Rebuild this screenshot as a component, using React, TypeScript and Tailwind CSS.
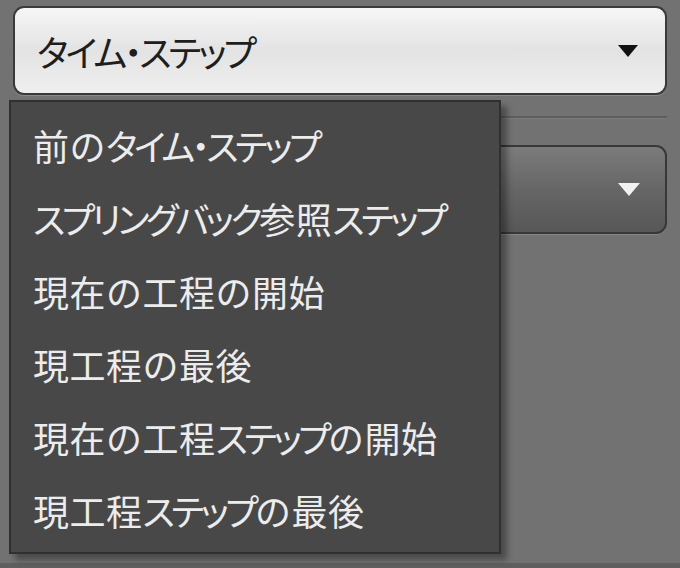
import React from "react";

const items = [
  "前のタイム・ステップ",
  "スプリングバック参照ステップ",
  "現在の工程の開始",
  "現工程の最後",
  "現在の工程ステップの開始",
  "現工程ステップの最後",
];

function isKata(ch: string) {
  const c = ch.charCodeAt(0);
  return c >= 0x30a0 && c <= 0x30ff;
}

function Runs({ text, tight }: { text: string; tight?: boolean }) {
  const runs: { kata: boolean; s: string }[] = [];
  for (const ch of text) {
    const k = isKata(ch);
    const last = runs[runs.length - 1];
    if (last && last.kata === k) last.s += ch;
    else runs.push({ kata: k, s: ch });
  }
  return (
    <>
      {runs.map((r, i) =>
        r.kata ? (
          <span
            key={i}
            className={
              tight
                ? "tracking-[-3.5px] [font-feature-settings:'palt']"
                : "tracking-[-3px] [font-feature-settings:'palt']"
            }
          >
            {r.s}
          </span>
        ) : (
          <span key={i} className="tracking-[0.5px]">
            {r.s}
          </span>
        )
      )}
    </>
  );
}

export default function App() {
  return (
    <div
      className="relative w-[680px] h-[568px] overflow-hidden bg-[#727272] flex flex-col"
      style={{ fontFamily: '"Noto Sans CJK JP", "Noto Sans", sans-serif' }}
    >
      <div className="flex-1 flex flex-col pl-[13px] pr-[13px] pt-[6px]">
        {/* top select */}
        <div className="h-[89px] rounded-[11px] border-2 border-[#3a3a3a] bg-gradient-to-b from-[#f6f6f6] via-[#e3e3e3] to-[#efefef] flex items-center pl-[22px] pr-[26px] shadow-[0_1px_0_#8a8a8a]">
          <span className="flex-1 text-[36px] leading-none text-[#1e1e1e] whitespace-nowrap">
            <Runs text="タイム・ステップ" />
          </span>
          <svg width="22" height="14" viewBox="0 0 22 14">
            <path d="M1 1 H21 L11 13 Z" fill="#111" />
          </svg>
        </div>
        {/* separator */}
        <div className="mt-[21px] h-[3px] border-t-2 border-[#5e5e5e] border-b border-b-[#7c7c7c]" />
        {/* second select */}
        <div className="mt-[26px] h-[89px] rounded-[11px] border-2 border-[#383838] bg-gradient-to-b from-[#7b7b7b] via-[#666] to-[#575757] flex items-center justify-end pr-[24px] shadow-[0_1px_0_#858585]">
          <svg width="24" height="15" viewBox="0 0 24 15">
            <path d="M1 1 H23 L12 14 Z" fill="#f2f2f2" />
          </svg>
        </div>
      </div>
      <div className="h-[5px] bg-[#5f5f5f]" />

      {/* dropdown menu */}
      <div className="absolute left-[9px] top-[100px] w-[492px] h-[454px] bg-[#484848] border-[2px] border-[#303030] shadow-[6px_6px_6px_rgba(0,0,0,0.35)] pt-[6px] pl-[22px]">
        {items.map((t) => (
          <div
            key={t}
            className="h-[73px] flex items-center text-[36px] leading-none text-[#ececec] whitespace-nowrap"
          >
            <Runs text={t} tight />
          </div>
        ))}
      </div>
    </div>
  );
}
